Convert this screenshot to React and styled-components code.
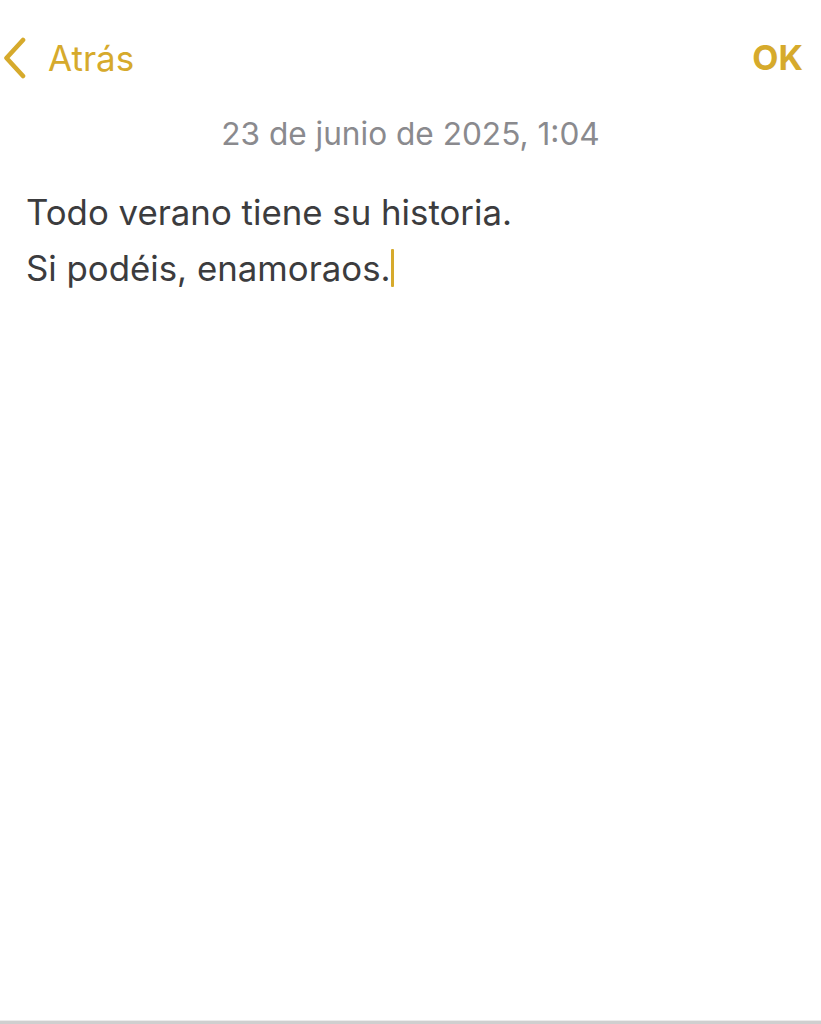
import React from "react";
import styled, { createGlobalStyle } from "styled-components";

const GlobalStyle = createGlobalStyle`
  html, body {
    margin: 0;
    padding: 0;
    background: #ffffff;
  }
  body {
    font-family: Inter, "Noto Sans", sans-serif;
  }
`;

const Screen = styled.div`
  width: 821px;
  height: 1024px;
  display: flex;
  flex-direction: column;
  background: #ffffff;
  overflow: hidden;
`;

const NavBar = styled.div`
  height: 116px;
  padding: 36px 18px 0 2px;
  display: flex;
  align-items: flex-start;
  justify-content: space-between;
  box-sizing: border-box;
`;

const BackButton = styled.div`
  display: flex;
  align-items: center;
  gap: 21px;
  color: #d6aa2c;
  font-size: 35px;
  line-height: 44px;
`;

const DoneButton = styled.div`
  color: #d6aa2c;
  font-size: 34px;
  font-weight: 700;
  line-height: 44px;
`;

const DateLine = styled.div`
  text-align: center;
  color: #8a8a8e;
  font-size: 31.6px;
  line-height: 36px;
`;

const Body = styled.div`
  flex: 1;
  padding: 32px 26px 0;
  color: #3c3c3e;
  font-size: 34.8px;
  line-height: 56px;
`;

const Caret = styled.span`
  display: inline-block;
  width: 3px;
  height: 38px;
  margin-left: 0;
  vertical-align: -6px;
  background: #d6aa2c;
  border-radius: 1px;
`;

const HomeEdge = styled.div`
  height: 3px;
  background: #cfcfcf;
  border-top: 1px solid #ececec;
`;

const Chevron = () => (
  <svg width="25" height="42" viewBox="0 0 25 42" fill="none">
    <path
      d="M21 3 L4.5 21 L21 39"
      stroke="#d6aa2c"
      strokeWidth="4.6"
      strokeLinecap="round"
      strokeLinejoin="round"
    />
  </svg>
);

export default function App() {
  return (
    <>
      <GlobalStyle />
      <Screen>
        <NavBar>
          <BackButton>
            <Chevron />
            Atrás
          </BackButton>
          <DoneButton>OK</DoneButton>
        </NavBar>
        <DateLine>23 de junio de 2025, 1:04</DateLine>
        <Body>
          Todo verano tiene su historia.
          <br />
          Si podéis, enamoraos.
          <Caret />
        </Body>
        <HomeEdge />
      </Screen>
    </>
  );
}
